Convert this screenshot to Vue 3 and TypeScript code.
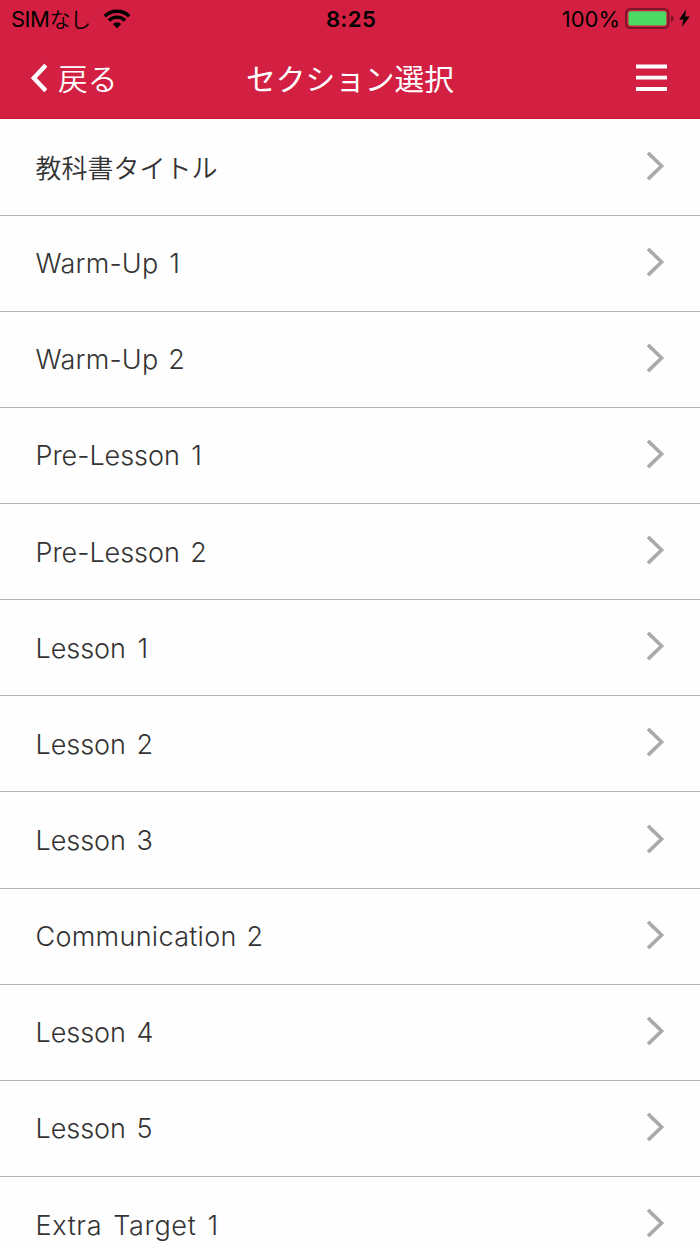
<script setup lang="ts">
interface Section {
  title: string
  tracking: number
  wordGap: number
  japanese?: boolean
}

const sections: Section[] = [
  { title: '教科書タイトル', tracking: 0, wordGap: 0, japanese: true },
  { title: 'Warm-Up 1', tracking: 0.2, wordGap: 3.2 },
  { title: 'Warm-Up 2', tracking: 0.2, wordGap: 2 },
  { title: 'Pre-Lesson 1', tracking: -0.05, wordGap: 4 },
  { title: 'Pre-Lesson 2', tracking: -0.05, wordGap: 3 },
  { title: 'Lesson 1', tracking: -0.05, wordGap: 4.2 },
  { title: 'Lesson 2', tracking: -0.05, wordGap: 3 },
  { title: 'Lesson 3', tracking: -0.05, wordGap: 3 },
  { title: 'Communication 2', tracking: 0.3, wordGap: 2 },
  { title: 'Lesson 4', tracking: -0.05, wordGap: 3 },
  { title: 'Lesson 5', tracking: -0.05, wordGap: 3 },
  { title: 'Extra Target 1', tracking: 0.65, wordGap: 2.8 },
]
</script>

<template>
  <div class="screen">
    <header class="header">
      <div class="status">
        <div class="carrier">
          <span class="carrier-name">SIM<span class="kana">なし</span></span>
          <svg class="wifi" width="28" height="20" viewBox="0 0 28 20">
            <g fill="none" stroke="#000" stroke-width="3.4">
              <path d="M1.8 7.2A17.4 17.4 0 0 1 26.2 7.2" />
              <path d="M5.9 11.5A11.4 11.4 0 0 1 22.1 11.5" />
            </g>
            <path d="M9.8 14.9A6.2 6.2 0 0 1 18.2 14.9L14 19.2Z" fill="#000" />
          </svg>
        </div>
        <div class="clock">8:25</div>
        <div class="power">
          <span class="percent">100%</span>
          <svg class="battery" width="66" height="22" viewBox="0 0 66 22">
            <rect x="1" y="1" width="42.5" height="19" rx="4.5" fill="none" stroke="#7e1428" stroke-width="2" />
            <rect x="3.5" y="3.2" width="37.8" height="14.4" rx="2" fill="#4cd964" />
            <path d="M46 7.2Q48.8 8.2 48.8 10.7T46 14.2Z" fill="#7e1428" />
            <path d="M61 1.4L54.2 11.4H58.4L57 18.8L64.8 8.4H60.2Z" fill="#000" />
          </svg>
        </div>
      </div>
      <nav class="nav">
        <button class="back" type="button">
          <svg width="18" height="30" viewBox="0 0 18 30">
            <path d="M16.8 2.2L4.8 15L16.8 27.8" fill="none" stroke="#fff" stroke-width="4.4" />
          </svg>
          <span class="back-label">戻る</span>
        </button>
        <h1 class="title">セクション選択</h1>
        <button class="menu" type="button" aria-label="menu">
          <svg width="31" height="28" viewBox="0 0 31 28">
            <path d="M0 2.5H31M0 13.7H31M0 25H31" stroke="#fff" stroke-width="3.8" />
          </svg>
        </button>
      </nav>
    </header>
    <ul class="list">
      <li v-for="section in sections" :key="section.title" class="row">
        <span
          class="label"
          :class="{ japanese: section.japanese }"
          :style="{ letterSpacing: `${section.tracking}px`, wordSpacing: `${section.wordGap}px` }"
        >{{ section.title }}</span>
        <svg class="chevron" width="20" height="30" viewBox="0 0 20 30">
          <path d="M2 1.9L15.6 15L2 28.1" fill="none" stroke="#aaa" stroke-width="3.6" />
        </svg>
      </li>
    </ul>
  </div>
</template>

<style>
html,
body {
  margin: 0;
  overflow: hidden;
}
</style>

<style scoped>
.screen {
  width: 700px;
  height: 1244px;
  overflow: hidden;
  background: #fefefe;
  font-family: Inter, "Noto Sans CJK JP", sans-serif;
}
.header {
  box-sizing: border-box;
  height: 119.4px;
  background: #d32042;
  border-bottom: 1px solid #d0102f;
}
.status {
  display: grid;
  grid-template-columns: 1fr auto 1fr;
  align-items: center;
  height: 38px;
  padding: 0 9px 0 11px;
  color: #000;
}
.carrier {
  display: flex;
  align-items: center;
  gap: 13px;
}
.carrier-name {
  font-size: 22px;
  line-height: 38px;
  letter-spacing: -0.5px;
}
.kana {
  font-size: 21px;
  font-weight: 350;
  line-height: 1;
}
.clock {
  font-size: 22px;
  font-weight: 600;
  letter-spacing: 0.4px;
}
.power {
  display: flex;
  align-items: center;
  justify-content: flex-end;
  gap: 5px;
}
.percent {
  font-size: 22px;
}
.nav {
  display: grid;
  grid-template-columns: 1fr auto 1fr;
  align-items: center;
  height: 80px;
  padding: 0 33px 0 29px;
  color: #fff;
}
.back,
.menu {
  display: flex;
  align-items: center;
  padding: 0;
  border: 0;
  background: none;
  color: inherit;
  font: inherit;
}
.back {
  gap: 11px;
  font-size: 29.7px;
  font-family: "Noto Sans CJK JP", sans-serif;
  font-weight: 350;
}
.back-label {
  margin-top: -2px;
}
.menu {
  justify-self: end;
}
.title {
  margin: -1px 0 0 4px;
  font-family: "Noto Sans CJK JP", sans-serif;
  font-size: 29.7px;
  font-weight: 400;
  line-height: 40px;
}
.list {
  margin: 0;
  padding: 0.12px 0 0;
  list-style: none;
}
.row {
  box-sizing: border-box;
  display: flex;
  align-items: center;
  justify-content: space-between;
  height: 96.15px;
  padding: 0 34px 0 35.5px;
  border-bottom: 1px solid #b4b4b4;
}
.label {
  margin-top: 2px;
  color: #333;
  font-size: 27px;
  font-weight: 300;
  line-height: 40px;
  white-space: pre;
}
.japanese {
  margin-top: 0;
  font-family: "Noto Sans CJK JP", sans-serif;
  font-size: 26px;
  font-weight: 350;
}
.chevron {
  margin-top: -3px;
}
</style>
